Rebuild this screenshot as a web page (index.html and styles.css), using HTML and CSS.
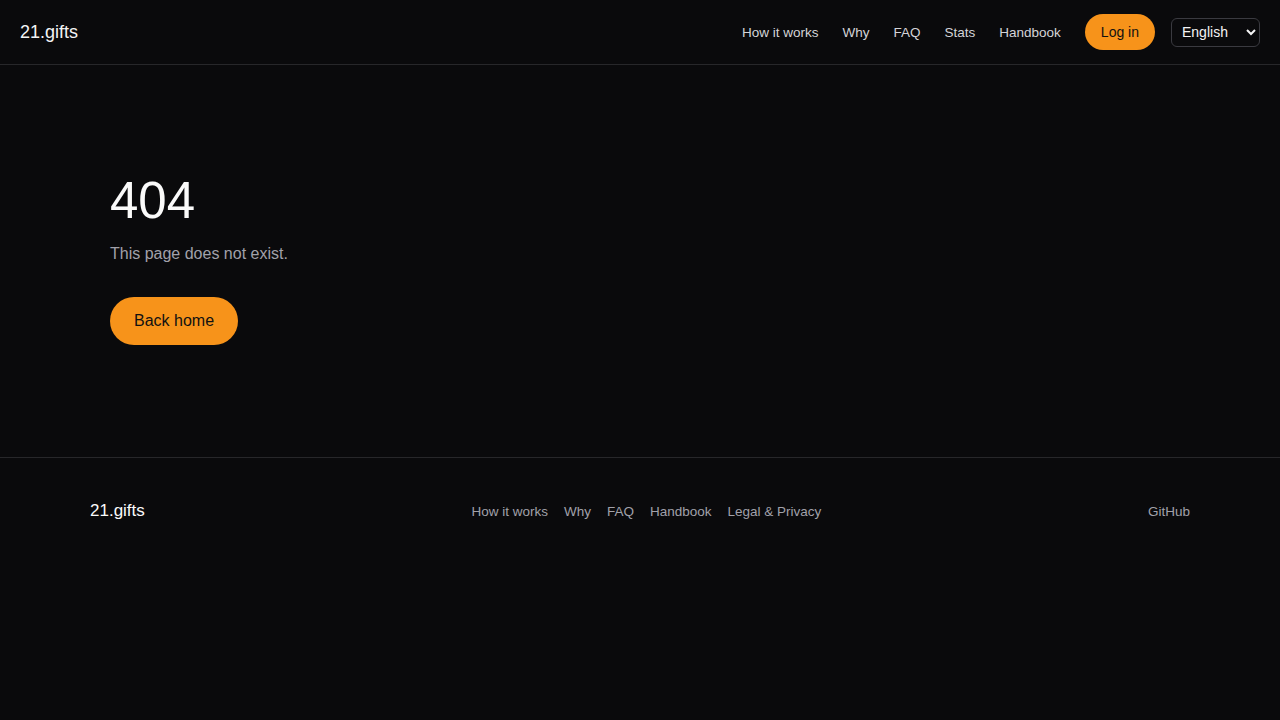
FILE: index.html
```html
<!DOCTYPE html>
<html lang="en">
<head>
<meta charset="utf-8">
<title>404 · 21.gifts</title>
<link rel="stylesheet" href="styles.css">
</head>
<body>
<header class="topbar">
  <a class="brand" href="#">21.gifts</a>
  <nav class="topnav">
    <a href="#">How it works</a>
    <a href="#">Why</a>
    <a href="#">FAQ</a>
    <a href="#">Stats</a>
    <a href="#">Handbook</a>
    <a class="pill pill-sm" href="#">Log in</a>
    <select class="lang">
      <option>English</option>
    </select>
  </nav>
</header>

<main class="notfound">
  <h1 class="code">404</h1>
  <p class="lead">This page does not exist.</p>
  <a class="pill pill-lg" href="#">Back home</a>
</main>

<footer class="footer">
  <div class="footer-inner">
    <a class="footer-brand" href="#">21.gifts</a>
    <nav class="footer-links">
      <a href="#">How it works</a>
      <a href="#">Why</a>
      <a href="#">FAQ</a>
      <a href="#">Handbook</a>
      <a href="#">Legal &amp; Privacy</a>
    </nav>
    <a class="footer-gh" href="#">GitHub</a>
  </div>
</footer>
</body>
</html>
```

FILE: styles.css
```css
* { box-sizing: border-box; }

html, body {
  margin: 0;
  background: #0a0a0c;
  color: #f4f4f5;
  font-family: "Liberation Sans", Arial, sans-serif;
}

a { color: inherit; text-decoration: none; }

.topbar {
  height: 65px;
  display: flex;
  align-items: center;
  justify-content: space-between;
  padding: 0 20px;
  border-bottom: 1px solid #27272a;
}

.brand {
  font-size: 18px;
  color: #f4f4f5;
}

.topnav {
  display: flex;
  align-items: center;
  gap: 24px;
  font-size: 13.5px;
  color: #d4d4d8;
}

.pill {
  display: inline-flex;
  align-items: center;
  justify-content: center;
  background: #f7931a;
  color: #111;
  border-radius: 999px;
}

.pill-sm {
  height: 36px;
  padding: 0 16px;
  font-size: 14px;
}

.lang {
  margin-left: -8px;
  height: 29px;
  width: 89px;
  background: #0a0a0c;
  color: #f4f4f5;
  border: 1px solid #3a3a40;
  border-radius: 6px;
  font-family: inherit;
  font-size: 14px;
  padding: 0 6px;
}

.notfound {
  height: 392px;
  padding: 106px 110px 0;
}

.code {
  margin: 0;
  font-size: 51px;
  font-weight: 400;
  line-height: 60px;
  color: #fafafa;
}

.lead {
  margin: 14px 0 34px;
  font-size: 16px;
  color: #a1a1aa;
}

.pill-lg {
  height: 48px;
  padding: 0 24px;
  font-size: 16px;
}

.footer {
  border-top: 1px solid #27272a;
}

.footer-inner {
  max-width: 1100px;
  margin: 0 auto;
  padding: 43px 0 40px;
  display: flex;
  align-items: center;
  justify-content: space-between;
}

.footer-brand {
  font-size: 17px;
  color: #fafafa;
}

.footer-links {
  display: flex;
  gap: 16px;
  font-size: 13.5px;
  color: #a1a1aa;
}

.footer-gh {
  font-size: 13.5px;
  color: #a1a1aa;
}
```
